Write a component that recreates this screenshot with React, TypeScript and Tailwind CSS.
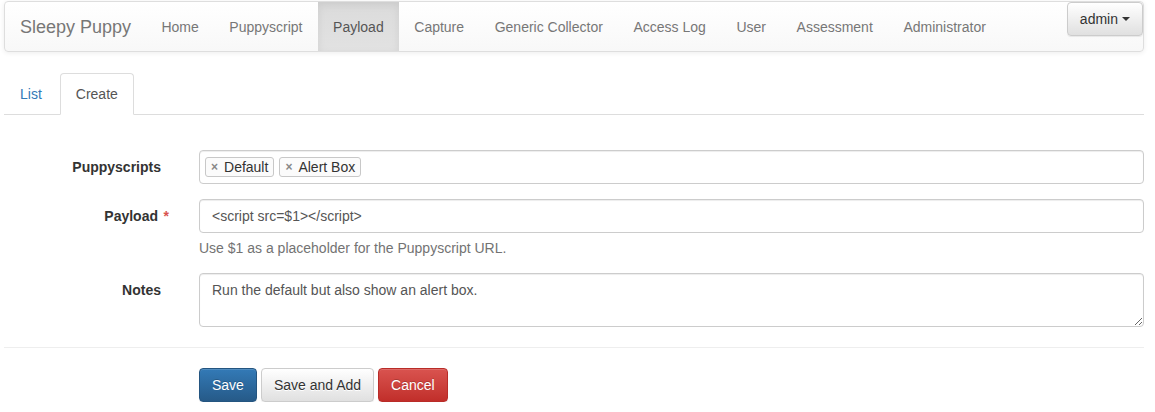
import React from "react";

const navItems = ["Home", "Puppyscript", "Payload", "Capture", "Generic Collector", "Access Log", "User", "Assessment", "Administrator"];

function Tag({ label }: { label: string }) {
  return (
    <span className="inline-flex items-center h-[20px] border border-[#c8c8c8] rounded-[3px] bg-[#fbfbfb] pl-[5px] pr-[5px] mr-[5px] text-[14px] text-[#333] leading-[18px]">
      <span className="text-[#888] text-[12px] font-bold mr-[6px] leading-[18px]">×</span>
      {label}
    </span>
  );
}

export default function App() {
  return (
    <div className="w-[1140px] ml-[4px] pt-[1px] font-['Liberation_Sans',Arial,sans-serif] text-[14px] text-[#333] bg-white">
      {/* Navbar */}
      <div className="relative h-[51px] border border-[#dedede] rounded-[4px] bg-gradient-to-b from-white to-[#f8f8f8] shadow-[inset_0_1px_0_rgba(255,255,255,0.15),0_1px_5px_rgba(0,0,0,0.075)] flex items-stretch">
        <div className="px-[15px] pt-[2px] text-[18px] leading-[47px] text-[#777]">Sleepy Puppy</div>
        <div className="flex items-stretch">
          {navItems.map((item) =>
            item === "Payload" ? (
              <div key={item} className="px-[15.3px] pt-[2px] leading-[47px] text-[#555] bg-gradient-to-b from-[#dbdbdb] to-[#e2e2e2] shadow-[inset_0_3px_9px_rgba(0,0,0,0.075)]">
                {item}
              </div>
            ) : (
              <div key={item} className="px-[15.3px] pt-[2px] leading-[47px] text-[#777]">
                {item}
              </div>
            )
          )}
        </div>
        <div className="absolute right-[0px] top-[0px] h-[34px] px-[12px] flex items-center border border-[#ccc] rounded-[4px] bg-gradient-to-b from-white to-[#e0e0e0] text-[#333] shadow-[inset_0_1px_0_rgba(255,255,255,0.15),0_1px_1px_rgba(0,0,0,0.075)]">
          admin
          <span className="ml-[4px] inline-block w-0 h-0 border-l-[4px] border-r-[4px] border-t-[4px] border-l-transparent border-r-transparent border-t-[#333]" />
        </div>
      </div>

      {/* Tabs */}
      <div className="mt-[21px] flex border-b border-[#ddd]">
        <div className="mr-[2px] px-[15px] pt-[10px] pb-[9px] leading-[20px] border border-transparent rounded-t-[4px] text-[#337ab7]">List</div>
        <div className="-mb-px px-[15px] pt-[10px] pb-[9px] leading-[20px] border border-[#ddd] border-b-white rounded-t-[4px] bg-white text-[#555]">Create</div>
      </div>

      {/* Form */}
      <div className="pt-[35px]">
        <div className="flex">
          <div className="w-[157px] text-right font-bold pt-[7px] leading-[20px]">Puppyscripts</div>
          <div className="ml-[38px] flex-1 h-[34px] border border-[#ccc] rounded-[4px] shadow-[inset_0_1px_1px_rgba(0,0,0,0.075)] flex items-center pl-[5px]">
            <Tag label="Default" />
            <Tag label="Alert Box" />
          </div>
        </div>

        <div className="flex mt-[15px]">
          <div className="w-[157px] text-right font-bold pt-[7px] pr-[3px] leading-[20px] relative">
            Payload
            <span className="absolute right-[-8px] top-[7px] text-[#d9534f] font-bold">*</span>
          </div>
          <div className="ml-[38px] flex-1">
            <div className="h-[34px] border border-[#ccc] rounded-[4px] shadow-[inset_0_1px_1px_rgba(0,0,0,0.075)] px-[12px] flex items-center text-[#555]">
              &lt;script src=$1&gt;&lt;/script&gt;
            </div>
            <div className="mt-[5px] leading-[20px] text-[#737373]">Use $1 as a placeholder for the Puppyscript URL.</div>
          </div>
        </div>

        <div className="flex mt-[15px]">
          <div className="w-[157px] text-right font-bold pt-[7px] leading-[20px]">Notes</div>
          <div className="ml-[38px] flex-1">
            <textarea
              readOnly
              defaultValue="Run the default but also show an alert box."
              className="block w-full h-[54px] border border-[#ccc] rounded-[4px] shadow-[inset_0_1px_1px_rgba(0,0,0,0.075)] px-[12px] py-[6px] leading-[20px] text-[#555] resize-y outline-none font-['Liberation_Sans',Arial,sans-serif] text-[14px]"
            />
          </div>
        </div>

        <div className="mt-[20px] border-t border-[#eee]" />

        <div className="mt-[20px] ml-[195px] flex gap-[4px]">
          <div className="h-[34px] px-[12px] flex items-center border border-[#245580] rounded-[4px] bg-gradient-to-b from-[#337ab7] to-[#265a88] text-white [text-shadow:0_-1px_0_rgba(0,0,0,0.2)] shadow-[inset_0_1px_0_rgba(255,255,255,0.15),0_1px_1px_rgba(0,0,0,0.075)]">
            Save
          </div>
          <div className="h-[34px] px-[12px] flex items-center border border-[#ccc] rounded-[4px] bg-gradient-to-b from-white to-[#e0e0e0] text-[#333] [text-shadow:0_1px_0_#fff] shadow-[inset_0_1px_0_rgba(255,255,255,0.15),0_1px_1px_rgba(0,0,0,0.075)]">
            Save and Add
          </div>
          <div className="h-[34px] px-[12px] flex items-center border border-[#b92c28] rounded-[4px] bg-gradient-to-b from-[#d9534f] to-[#c12e2a] text-white [text-shadow:0_-1px_0_rgba(0,0,0,0.2)] shadow-[inset_0_1px_0_rgba(255,255,255,0.15),0_1px_1px_rgba(0,0,0,0.075)]">
            Cancel
          </div>
        </div>
      </div>
    </div>
  );
}
